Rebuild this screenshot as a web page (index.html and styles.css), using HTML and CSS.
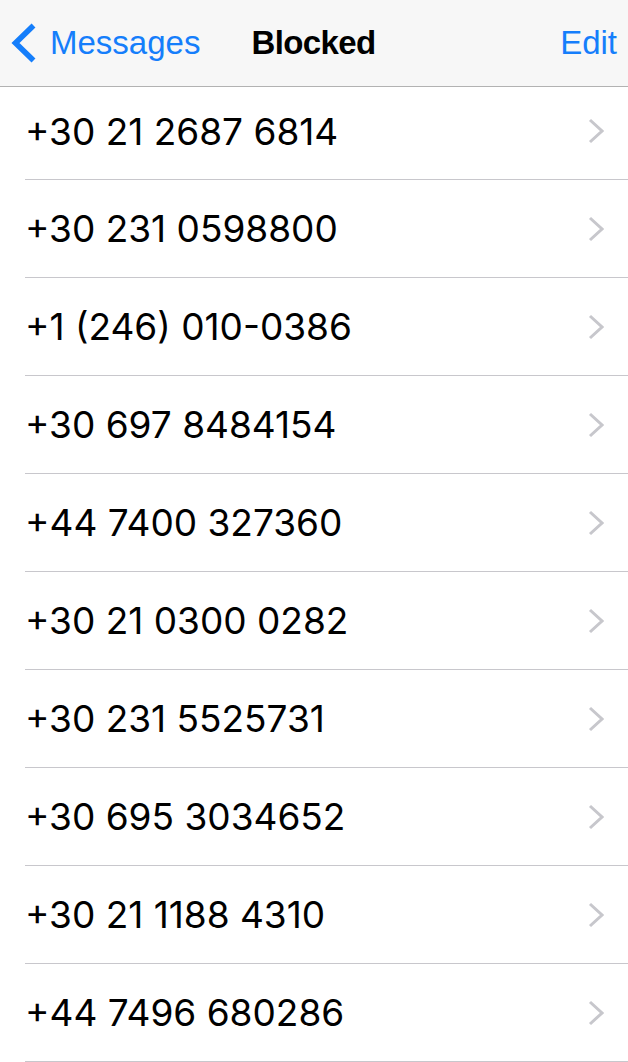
FILE: index.html
```html
<!DOCTYPE html>
<html lang="en">
<head>
<meta charset="utf-8">
<title>Blocked</title>
<link rel="stylesheet" href="styles.css">
</head>
<body>
<header class="nav">
  <a class="back">
    <svg class="back-icon" width="26" height="42" viewBox="0 0 26 42"><polyline points="22.5,3.5 4.5,21 22.5,38.5" fill="none" stroke="#157efb" stroke-width="5.6" stroke-linecap="butt" stroke-linejoin="miter"/></svg>
    <span class="back-label">Messages</span>
  </a>
  <h1 class="title">Blocked</h1>
  <a class="edit">Edit</a>
</header>
<ul class="list">
  <li class="row"><span class="num">+30 21 2687 6814</span><svg class="chev" width="16" height="26" viewBox="0 0 16 26"><polyline points="2,2 14,13 2,24" fill="none" stroke="#c7c7cc" stroke-width="3"/></svg></li>
  <li class="row"><span class="num">+30 231 0598800</span><svg class="chev" width="16" height="26" viewBox="0 0 16 26"><polyline points="2,2 14,13 2,24" fill="none" stroke="#c7c7cc" stroke-width="3"/></svg></li>
  <li class="row"><span class="num">+1 (246) 010-0386</span><svg class="chev" width="16" height="26" viewBox="0 0 16 26"><polyline points="2,2 14,13 2,24" fill="none" stroke="#c7c7cc" stroke-width="3"/></svg></li>
  <li class="row"><span class="num">+30 697 8484154</span><svg class="chev" width="16" height="26" viewBox="0 0 16 26"><polyline points="2,2 14,13 2,24" fill="none" stroke="#c7c7cc" stroke-width="3"/></svg></li>
  <li class="row"><span class="num">+44 7400 327360</span><svg class="chev" width="16" height="26" viewBox="0 0 16 26"><polyline points="2,2 14,13 2,24" fill="none" stroke="#c7c7cc" stroke-width="3"/></svg></li>
  <li class="row"><span class="num">+30 21 0300 0282</span><svg class="chev" width="16" height="26" viewBox="0 0 16 26"><polyline points="2,2 14,13 2,24" fill="none" stroke="#c7c7cc" stroke-width="3"/></svg></li>
  <li class="row"><span class="num">+30 231 5525731</span><svg class="chev" width="16" height="26" viewBox="0 0 16 26"><polyline points="2,2 14,13 2,24" fill="none" stroke="#c7c7cc" stroke-width="3"/></svg></li>
  <li class="row"><span class="num">+30 695 3034652</span><svg class="chev" width="16" height="26" viewBox="0 0 16 26"><polyline points="2,2 14,13 2,24" fill="none" stroke="#c7c7cc" stroke-width="3"/></svg></li>
  <li class="row"><span class="num">+30 21 1188 4310</span><svg class="chev" width="16" height="26" viewBox="0 0 16 26"><polyline points="2,2 14,13 2,24" fill="none" stroke="#c7c7cc" stroke-width="3"/></svg></li>
  <li class="row"><span class="num">+44 7496 680286</span><svg class="chev" width="16" height="26" viewBox="0 0 16 26"><polyline points="2,2 14,13 2,24" fill="none" stroke="#c7c7cc" stroke-width="3"/></svg></li>
</ul>
</body>
</html>
```
FILE: styles.css
```css
html, body {
  margin: 0;
  padding: 0;
  background: #ffffff;
}
body {
  font-family: "Liberation Sans", Arial, sans-serif;
  color: #000;
  width: 628px;
  height: 1062px;
  overflow: hidden;
}
.nav {
  height: 86px;
  background: #f7f7f7;
  border-bottom: 1px solid #b2b2b2;
  display: flex;
  align-items: center;
}
.back {
  display: flex;
  align-items: center;
  padding-left: 11px;
  color: #157efb;
  font-size: 33px;
  gap: 13px;
}
.back-icon {
  display: block;
}
.title {
  margin: 0 0 0 51px;
  font-size: 33px;
  font-weight: bold;
  letter-spacing: -0.6px;
}
.edit {
  margin-left: auto;
  margin-right: 11px;
  color: #157efb;
  font-size: 33px;
}
.list {
  list-style: none;
  margin: 0;
  padding: 0;
}
.row {
  margin-left: 25px;
  height: 97px;
  border-bottom: 1px solid #c8c7cc;
  display: flex;
  align-items: center;
  justify-content: space-between;
  padding-right: 24px;
}
.row:first-child {
  height: 88px;
  padding-bottom: 4px;
}
.num {
  font-family: Inter, "Liberation Sans", sans-serif;
  font-size: 37px;
}
.chev {
  display: block;
}
```
